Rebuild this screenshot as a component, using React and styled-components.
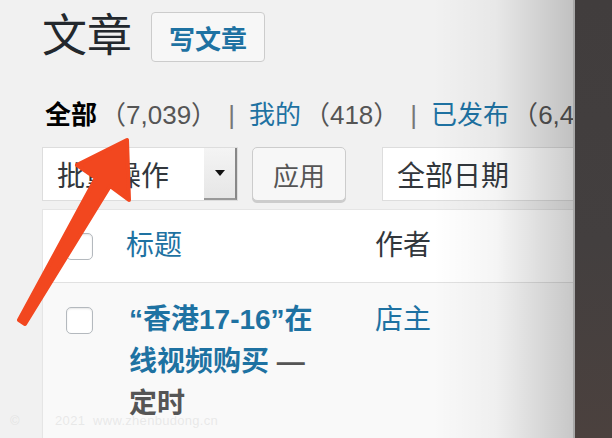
import React from 'react';
import styled, { createGlobalStyle } from 'styled-components';

const GlobalStyle = createGlobalStyle`
  html, body {
    margin: 0;
    padding: 0;
    background: #f1f1f1;
  }
  body {
    font-family: "Liberation Sans", "Noto Sans CJK SC", sans-serif;
    color: #444;
  }
`;

const Screen = styled.div`
  display: flex;
  width: 612px;
  height: 438px;
  overflow: hidden;
`;

const Page = styled.main`
  position: relative;
  flex: none;
  width: 573px;
  height: 100%;
  box-sizing: border-box;
  padding: 12px 0 0 42px;
  overflow: hidden;
  background: #f1f1f1;
`;

const Divider = styled.div`
  flex: none;
  width: 2px;
  background: #a8a8a8;
`;

const SidePanel = styled.div`
  flex: 1;
  background: linear-gradient(180deg, #413d3d 0%, #433f3f 55%, #4b413e 100%);
`;

const EdgeShade = styled.div`
  position: absolute;
  top: 0;
  right: 0;
  bottom: 0;
  width: 140px;
  pointer-events: none;
  background: linear-gradient(90deg, rgba(0,0,0,0) 0%, rgba(0,0,0,.04) 45%, rgba(0,0,0,.2) 100%);
`;

const TitleRow = styled.div`
  display: flex;
  align-items: center;
  gap: 19px;
  height: 50px;
`;

const PageTitle = styled.h1`
  margin: 0;
  font-size: 45px;
  font-weight: 400;
  line-height: 50px;
  color: #23282d;
`;

const AddNew = styled.a`
  display: inline-flex;
  align-items: center;
  height: 50px;
  box-sizing: border-box;
  padding: 0 17px;
  border: 1px solid #ccc;
  border-radius: 4px;
  background: #f7f7f7;
  color: #1e72a2;
  font-size: 26px;
  font-weight: 700;
`;

const Filters = styled.ul`
  display: flex;
  margin: 35px 0 0;
  padding: 0 0 0 3px;
  list-style: none;
  font-size: 26px;
  line-height: 36px;
  white-space: nowrap;
`;

const FilterItem = styled.li`
  display: flex;
`;

const FilterLink = styled.a`
  color: ${p => (p.$current ? '#000' : '#1e72a2')};
  font-weight: ${p => (p.$current ? 700 : 400)};
`;

const Count = styled.span`
  color: #555;
  margin-left: 3px;
`;

const Sep = styled.span`
  color: #777;
  margin: 0 14px 0 11px;
`;

const Actions = styled.div`
  display: flex;
  align-items: center;
  margin-top: 14px;
  height: 54px;
`;

const Select = styled.div`
  display: flex;
  flex: none;
  width: ${p => p.$width}px;
  height: 54px;
  box-sizing: border-box;
  margin-left: ${p => p.$gap || 0}px;
  border: 1px solid #ddd;
  background: #fff;
  font-size: 28px;
  color: #32373c;
`;

const SelectLabel = styled.span`
  flex: 1;
  display: flex;
  align-items: center;
  padding-left: 14px;
`;

const SelectArrow = styled.span`
  flex: none;
  width: 31px;
  display: flex;
  align-items: center;
  justify-content: center;
  background: linear-gradient(180deg, #f4f4f4 0%, #e6e6e6 100%);
  border-right: 2px solid #888;
  border-bottom: 2px solid #999;
  &::after {
    content: '';
    border-left: 5px solid transparent;
    border-right: 5px solid transparent;
    border-top: 6px solid #111;
  }
`;

const Button = styled.button`
  flex: none;
  width: 94px;
  height: 54px;
  margin-left: 14px;
  border: 1px solid #ccc;
  border-radius: 5px;
  background: #f7f7f7;
  box-shadow: 0 2px 0 #ccc;
  font-family: inherit;
  font-size: 26px;
  color: #555;
  padding: 0;
`;

const Table = styled.div`
  width: 620px;
  margin-top: 8px;
  border: 1px solid #e5e5e5;
  border-right: none;
  background: #fff;
  box-shadow: 0 1px 1px rgba(0,0,0,.04);
`;

const Row = styled.div`
  display: grid;
  grid-template-columns: 83px 249px 1fr;
  align-items: ${p => (p.$head ? 'center' : 'start')};
  height: ${p => (p.$head ? '72px' : 'auto')};
  padding-top: ${p => (p.$head ? 0 : 16)}px;
  padding-bottom: ${p => (p.$head ? 0 : 30)}px;
  background: ${p => (p.$head ? '#fff' : '#f9f9f9')};
  border-bottom: 1px solid ${p => (p.$head ? '#e1e1e1' : 'transparent')};
  font-size: 28px;
  line-height: 42px;
`;

const CheckCell = styled.div`
  padding-left: 23px;
  display: flex;
  align-items: center;
  height: ${p => (p.$head ? 'auto' : '42px')};
`;

const Checkbox = styled.span`
  width: 27px;
  height: 27px;
  box-sizing: border-box;
  border: 1px solid #b4b9be;
  border-radius: 5px;
  background: #fff;
  box-shadow: inset 0 1px 2px rgba(0,0,0,.1);
`;

const ColHead = styled.span`
  color: ${p => (p.$link ? '#1e72a2' : '#32373c')};
`;

const TitleCell = styled.div`
  padding: 0 52px 0 3px;
  color: #555;
  font-weight: 700;
`;

const TitleLink = styled.a`
  color: #1e72a2;
`;

const State = styled.span`
  color: #555;
`;

const AuthorLink = styled.a`
  color: #1e72a2;
`;

const Watermark = styled.div`
  position: absolute;
  left: 10px;
  top: 413px;
  font-size: 13px;
  letter-spacing: .3px;
  color: rgba(200, 200, 200, .35);
  white-space: pre;
  pointer-events: none;
`;

const ArrowSvg = styled.svg`
  position: absolute;
  left: 0;
  top: 0;
  pointer-events: none;
`;

const filters = [
  { label: '全部', count: '7,039', current: true },
  { label: '我的', count: '418' },
  { label: '已发布', count: '6,4' },
];

const Arrow = () => (
  <ArrowSvg width="160" height="340" viewBox="0 0 160 340">
    <polygon
      points="127,140 129,200 110,186 25,324 19,320 96,178 77,165"
      fill="#f2471f"
      stroke="#f2471f"
      strokeWidth="4"
      strokeLinejoin="round"
    />
  </ArrowSvg>
);

export default function App() {
  return (
    <>
      <GlobalStyle />
      <Screen>
        <Page>
          <TitleRow>
            <PageTitle>文章</PageTitle>
            <AddNew>写文章</AddNew>
          </TitleRow>

          <Filters>
            {filters.map((f, i) => (
              <FilterItem key={f.label}>
                <FilterLink $current={f.current}>{f.label}</FilterLink>
                <Count>（{f.count}{i < 2 ? '）' : ''}</Count>
                {i < 2 && <Sep>|</Sep>}
              </FilterItem>
            ))}
          </Filters>

          <Actions>
            <Select $width={196}>
              <SelectLabel>批量操作</SelectLabel>
              <SelectArrow />
            </Select>
            <Button>应用</Button>
            <Select $width={230} $gap={36}>
              <SelectLabel>全部日期</SelectLabel>
            </Select>
          </Actions>

          <Table>
            <Row $head>
              <CheckCell $head><Checkbox /></CheckCell>
              <ColHead $link>标题</ColHead>
              <ColHead>作者</ColHead>
            </Row>
            <Row>
              <CheckCell><Checkbox /></CheckCell>
              <TitleCell>
                <TitleLink>“香港17-16”在线视频购买</TitleLink> — <State>定时</State>
              </TitleCell>
              <AuthorLink>店主</AuthorLink>
            </Row>
          </Table>

          <Watermark>{'©         2021  www.zhenbudong.cn'}</Watermark>
          <Arrow />
          <EdgeShade />
        </Page>
        <Divider />
        <SidePanel />
      </Screen>
    </>
  );
}
